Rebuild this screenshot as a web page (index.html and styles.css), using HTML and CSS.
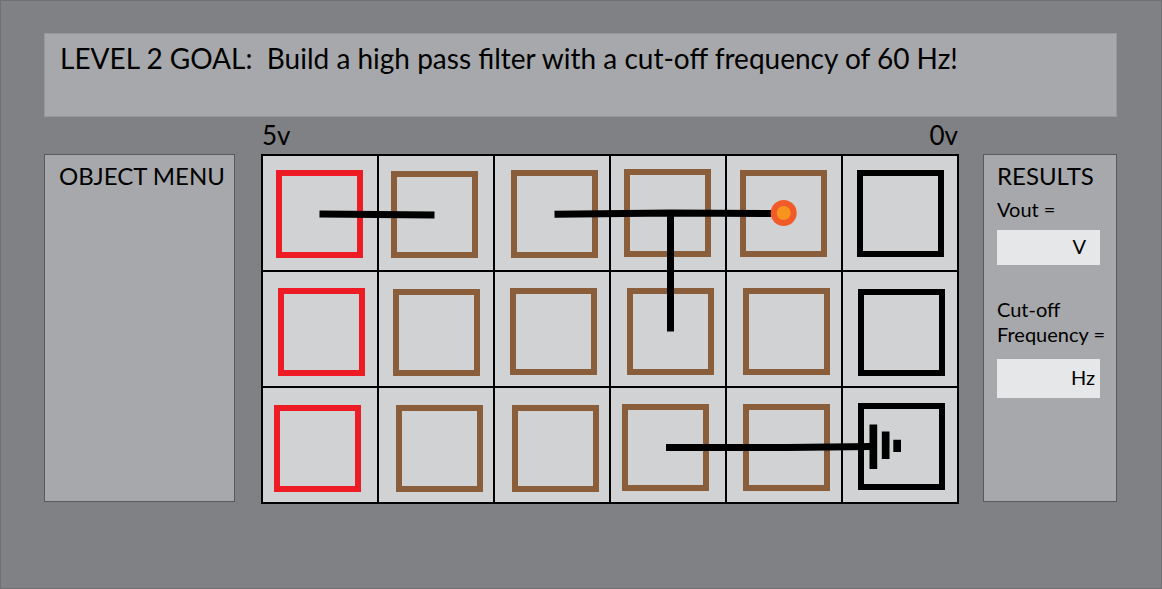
FILE: index.html
```html
<!DOCTYPE html>
<html lang="en">
<head>
<meta charset="utf-8">
<meta name="viewport" content="width=device-width, initial-scale=1">
<title>Level 2</title>
<link rel="stylesheet" href="styles.css">
</head>
<body>
<main class="game">
  <header class="goal">
    <h1 class="goal-text">LEVEL 2 GOAL:&nbsp; Build a high pass filter with a cut-off frequency of 60 Hz!</h1>
  </header>
  <div class="workspace">
    <div class="rails"><span>5v</span><span>0v</span></div>
    <section class="panel menu">
      <h2 class="panel-title">OBJECT MENU</h2>
    </section>
    <section class="board">
      <svg class="board-art" viewBox="261 154 698 350" role="img" aria-label="Circuit board">
        <rect class="board-base" x="262" y="155" width="696" height="348"/>
        <path class="grid-line" d="M378 155V503M494 155V503M610 155V503M726 155V503M842 155V503M262 271H958M262 387H958"/>
        <g class="node source">
          <rect x="279" y="173" width="81" height="82"/>
          <rect x="281" y="291" width="81" height="82"/>
          <rect x="277" y="408" width="81" height="81"/>
        </g>
        <g class="node">
          <rect x="394" y="174" width="81" height="81"/>
          <rect x="514" y="173" width="81" height="82"/>
          <rect x="627" y="172" width="81" height="82"/>
          <rect x="743" y="173" width="81" height="81"/>
          <rect x="396" y="292" width="81" height="81"/>
          <rect x="513" y="291" width="81" height="81"/>
          <rect x="630" y="291" width="81" height="81"/>
          <rect x="746" y="291" width="81" height="81"/>
          <rect x="399" y="408" width="81" height="81"/>
          <rect x="515" y="408" width="81" height="81"/>
          <rect x="625" y="407" width="81" height="81"/>
          <rect x="746" y="407" width="81" height="81"/>
        </g>
        <g class="node sink">
          <rect x="860" y="173" width="81" height="81"/>
          <rect x="861" y="292" width="81" height="81"/>
          <rect x="861" y="406" width="81" height="81"/>
        </g>
        <path class="wire" d="M319.500 214L434.500 215M554.500 214.300L670.500 213L771 213.500M670.500 211V331.500M666 447.500H787L872 446.500"/>
        <path class="ground" d="M869.500 424.500H877.200V469H869.500ZM881.800 431.500H889.500V459H881.800ZM893.300 439.700H901V452H893.300Z"/>
        <circle class="probe" cx="783.700" cy="213" r="10"/>
      </svg>
    </section>
    <section class="panel results">
      <h2 class="panel-title">RESULTS</h2>
      <label class="caption" for="vout">Vout =</label>
      <div class="field"><input id="vout" class="field-input" type="text"><span class="unit">V</span></div>
      <label class="caption caption-cutoff" for="cutoff">Cut-off<br>Frequency =</label>
      <div class="field field-cutoff"><input id="cutoff" class="field-input" type="text"><span class="unit">Hz</span></div>
    </section>
  </div>
</main>
</body>
</html>
```
FILE: styles.css
```css
* {
  box-sizing: border-box;
}

body {
  margin: 0;
  background: #808184;
  color: #000;
  font-family: Lato, "Open Sans", sans-serif;
}

.game {
  min-height: 100vh;
  padding: 32px 44px 32px 43px;
  border: 1px solid #6f706f;
  background: #808184;
}

.goal {
  min-height: 84px;
  padding: 6px 15px;
  border: 1px solid #97989b;
  background: #a7a8ab;
}

.goal-text {
  margin: 0;
  font-size: 28px;
  font-weight: 400;
  line-height: 36px;
}

.workspace {
  display: grid;
  grid-template-columns: 191px 1fr 134px;
  grid-template-rows: 37px auto;
  column-gap: 24px;
}

.rails {
  grid-column: 2;
  display: flex;
  justify-content: space-between;
  padding: 2px 1px 2px 3px;
  font-size: 26px;
  line-height: 32px;
}

.panel {
  grid-row: 2;
  margin-bottom: 2px;
  padding: 4px 0 4px 14px;
  border: 1px solid #58595b;
  background: #a7a8ab;
}

.menu {
  grid-column: 1;
}

.board {
  grid-column: 2;
  grid-row: 2;
  padding-left: 2px;
}

.results {
  grid-column: 3;
  padding-left: 13px;
}

.panel-title {
  margin: 0;
  font-size: 24px;
  font-weight: 400;
  line-height: 34px;
  white-space: nowrap;
}

.caption {
  display: block;
  margin-top: 4px;
  font-size: 20px;
  line-height: 25px;
  white-space: nowrap;
}

.caption-cutoff {
  margin-top: 32px;
}

.field {
  display: flex;
  align-items: center;
  height: 35px;
  margin: 8px 16px 0 0;
  padding: 0 14px 4px 0;
  background: #e6e7e8;
  font-size: 20px;
}

.field-cutoff {
  height: 39px;
  margin-top: 12px;
  padding-right: 5px;
}

.field-input {
  flex: 1;
  min-width: 0;
  padding: 0 4px;
  border: 0;
  background: transparent;
  font: inherit;
  text-align: right;
}

.board-art {
  display: block;
  width: 100%;
}

.board-base {
  fill: #d0d2d3;
  stroke: #000;
  stroke-width: 2;
}

.grid-line {
  fill: none;
  stroke: #000;
  stroke-width: 2;
}

.node {
  fill: none;
  stroke: #8b5e3b;
  stroke-width: 6;
}

.source {
  stroke: #ed1c24;
}

.sink {
  stroke: #000;
}

.wire {
  fill: none;
  stroke: #000;
  stroke-width: 7;
}

.ground {
  fill: #000;
}

.probe {
  fill: #f7941d;
  stroke: #f15a29;
  stroke-width: 6;
}
```
